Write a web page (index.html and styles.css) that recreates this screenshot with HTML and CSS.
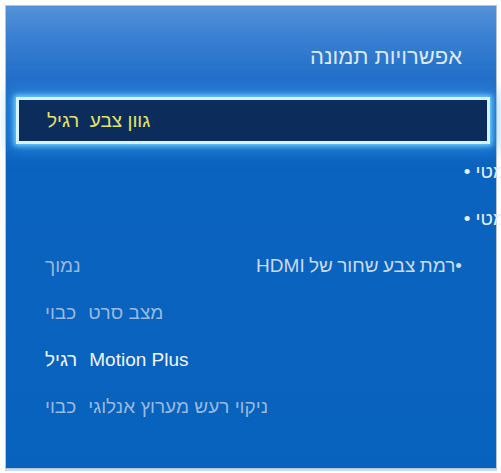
FILE: index.html
```html
<!DOCTYPE html>
<html lang="he">
<head>
<meta charset="utf-8">
<title>אפשרויות תמונה</title>
<link rel="stylesheet" href="styles.css">
</head>
<body>
<div class="panel" dir="rtl">
  <div class="header">
    <h1 class="title">אפשרויות תמונה</h1>
  </div>
  <div class="selected">
    <span class="selected-text">גוון צבע&nbsp;&nbsp;רגיל</span>
  </div>
  <ul class="list">
    <li class="row row-cut"><span>מטי •</span></li>
    <li class="row row-cut"><span>מטי •</span></li>
    <li class="row row-split"><span class="label">•רמת צבע שחור של HDMI</span><span class="value dim">נמוך</span></li>
    <li class="row row-left dim"><span>מצב סרט<span class="gap"></span>כבוי</span></li>
    <li class="row row-left bright"><span>Motion Plus<span class="gap"></span>רגיל</span></li>
    <li class="row row-left dim"><span>ניקוי רעש מערוץ אנלוגי<span class="gap"></span>כבוי</span></li>
  </ul>
</div>
</body>
</html>
```
FILE: styles.css
```css
html, body {
  margin: 0;
  padding: 0;
  background: #ffffff;
  overflow: hidden;
}
body {
  width: 501px;
  height: 473px;
  font-family: "Liberation Sans", Arial, sans-serif;
}
.panel {
  margin: 5px 0 0 5px;
  width: 490px;
  height: 462px;
  border: 1px solid #b8c4d2;
  background: linear-gradient(to bottom, #5592d8 0px, #3a80d2 30px, #2370c9 70px, #1a6ac6 100px, #0b63bf 160px, #0762be 100%);
  box-shadow: 0 2px 0 #c6dcf0;
  display: flex;
  flex-direction: column;
}
.header {
  height: 91px;
  padding-right: 34px;
  box-sizing: border-box;
  padding-top: 39px;
}
.title {
  margin: 0;
  font-weight: normal;
  font-size: 22px;
  line-height: 24px;
  color: #dce9f7;
}
.selected {
  margin: 0 6px 0 10px;
  height: 47px;
  box-sizing: border-box;
  border: 3px solid #d6f2ff;
  background: #0c2d5c;
  box-shadow: 0 0 5px 2px rgba(120, 215, 255, 0.9), 0 0 14px 6px rgba(60, 160, 240, 0.55);
  display: flex;
  align-items: center;
  justify-content: flex-end;
  padding-left: 28px;
}
.selected-text {
  font-size: 19px;
  color: #e6e26a;
}
.list {
  list-style: none;
  margin: 4px 0 0 0;
  padding: 0 34px 0 39px;
}
.row {
  height: 47px;
  line-height: 47px;
  font-size: 19px;
  display: flex;
  white-space: nowrap;
  color: #d4e3f4;
}
.row-cut {
  margin-right: -44px;
  color: #e8eff8;
}
.row-split {
  justify-content: space-between;
  color: #c9dbef;
}
.row-split .label {
  word-spacing: -1px;
}
.row-left {
  justify-content: flex-end;
}
.gap {
  display: inline-block;
  width: 12px;
}
.dim {
  color: #98badf;
}
.bright {
  color: #f2f6fb;
}
```
